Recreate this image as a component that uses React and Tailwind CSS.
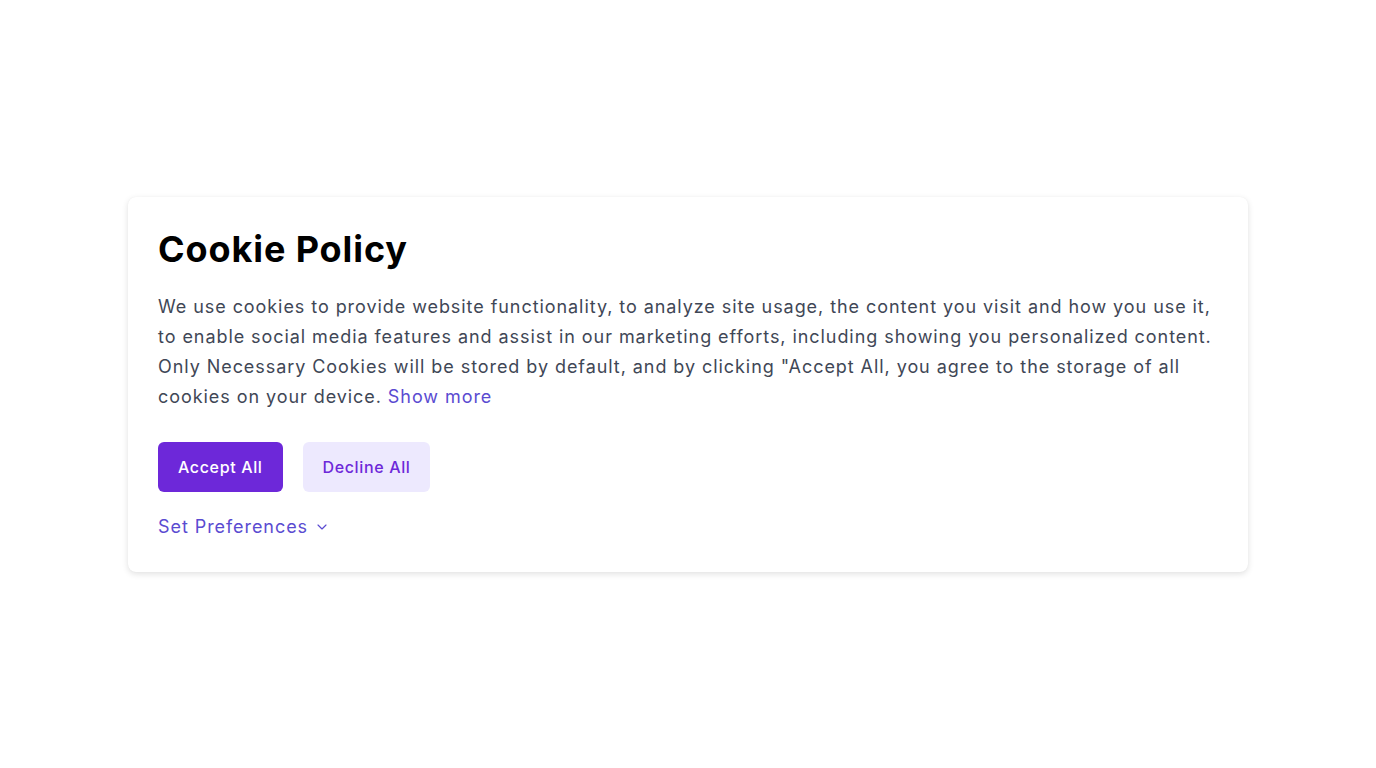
import React from "react";

export default function App() {
  return (
    <div
      className="min-h-screen w-full bg-white flex items-center justify-center"
      style={{ fontFamily: "Inter, 'Noto Sans', sans-serif" }}
    >
      <div className="w-[1120px] bg-white rounded-lg shadow-[0_2px_6px_rgba(0,0,0,0.12),0_0_1px_rgba(0,0,0,0.06)] pt-[31px] pb-[30px] px-[30px]">
        <h1 className="text-[36px] leading-[42px] font-bold text-black tracking-[0.025em] mb-[22px]">
          Cookie Policy
        </h1>
        <p className="text-[18px] leading-[30px] text-[#3f4756] tracking-[0.052em]">
          We use cookies to provide website functionality, to analyze site usage, the content you visit and how you use it, to enable social media features and assist in our marketing efforts, including showing you personalized content. Only Necessary Cookies will be stored by default, and by clicking "Accept All, you agree to the storage of all cookies on your device.{" "}
          <a className="text-[#5a4bd1] cursor-pointer">Show more</a>
        </p>
        <div className="flex gap-5 mt-[30px]">
          <button className="h-[50px] px-5 rounded-md bg-[#6d28d9] text-white text-[16px] font-medium tracking-[0.04em]">
            Accept All
          </button>
          <button className="h-[50px] px-5 rounded-md bg-[#ede9fe] text-[#6d28d9] text-[16px] font-medium tracking-[0.04em]">
            Decline All
          </button>
        </div>
        <div className="mt-5 flex items-center gap-1.5 text-[#5a4bd1] text-[18px] leading-[30px] tracking-[0.052em]">
          <span>Set Preferences</span>
          <svg width="16" height="16" viewBox="0 0 24 24" fill="none" stroke="currentColor" strokeWidth="1.75" strokeLinecap="round" strokeLinejoin="round">
            <path d="m6 9 6 6 6-6" />
          </svg>
        </div>
      </div>
    </div>
  );
}
